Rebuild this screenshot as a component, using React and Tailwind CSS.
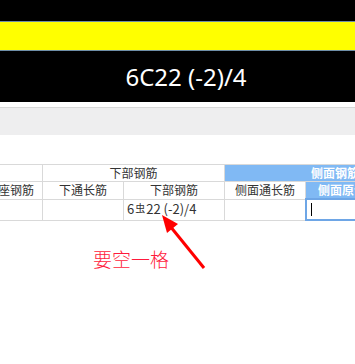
export default function App() {
  return (
    <div className="relative w-[355px] h-[364px] overflow-hidden bg-white font-['Noto_Sans','Noto_Sans_CJK_SC',sans-serif]">
      {/* top display bars */}
      <div className="h-[21px] bg-black" />
      <div className="h-[30px] bg-[#ffff00] border-y border-[#6f8fa8]" />
      <div className="h-[51px] bg-black flex items-center justify-center pl-[17px]">
        <span className="text-white text-[24px] leading-none">6C22 (-2)/4</span>
      </div>
      <div className="h-[5px]" />
      <div className="h-[28px] bg-[#eeeeef] border-t border-[#d8d8d8]" />
      <div className="h-[29px]" />

      {/* grid */}
      <div className="overflow-hidden">
        <table className="ml-[-20px] w-[464px] min-w-[464px] border-collapse table-fixed text-[12px] text-[#333] font-['Noto_Sans_CJK_SC',sans-serif]">
          <colgroup>
            <col className="w-[62px]" />
            <col className="w-[81px]" />
            <col className="w-[101px]" />
            <col className="w-[81px]" />
            <col className="w-[139px]" />
          </colgroup>
          <tbody>
            <tr className="h-[17px]">
              <td className="border border-[#d9d9d9] p-0" />
              <td colSpan={2} className="border border-[#d9d9d9] p-0 text-center leading-[16px]">下部钢筋</td>
              <td colSpan={2} className="border border-[#d9d9d9] p-0 bg-[#80b9f4] text-white font-bold leading-[16px] whitespace-nowrap overflow-hidden">
                <div className="pl-[86px]">侧面钢筋</div>
              </td>
            </tr>
            <tr className="h-[17px]">
              <td className="border border-[#d9d9d9] p-0 text-right pr-[8px] whitespace-nowrap overflow-hidden leading-[16px]">支座钢筋</td>
              <td className="border border-[#d9d9d9] p-0 text-center leading-[16px] whitespace-nowrap">下通长筋</td>
              <td className="border border-[#d9d9d9] p-0 text-center leading-[16px] whitespace-nowrap">下部钢筋</td>
              <td className="border border-[#d9d9d9] p-0 text-center leading-[16px] whitespace-nowrap">侧面通长筋</td>
              <td className="border border-[#d9d9d9] p-0 bg-[#80b9f4] text-white font-bold leading-[16px] whitespace-nowrap overflow-hidden">
                <div className="pl-[12px]">侧面原位钢筋</div>
              </td>
            </tr>
            <tr className="h-[21px]">
              <td className="border border-[#d9d9d9] p-0" />
              <td className="border border-[#d9d9d9] p-0" />
              <td className="border border-[#d9d9d9] p-0 leading-[18px] whitespace-nowrap text-[13px]">
                <span className="pl-[3px]">6</span>
                <span className="text-[10px] relative top-[-2px] px-[1px]">虫</span>
                <span>22 (-2)/4</span>
              </td>
              <td className="border border-[#d9d9d9] p-0" />
              <td className="border-2 border-[#6ea6e6] p-0">
                <div className="ml-[4px] w-px h-[13px] bg-black" />
              </td>
            </tr>
          </tbody>
        </table>
      </div>

      {/* annotation */}
      <div className="pl-[93px] pt-[28px] text-[19px] leading-none text-[#ff1a3c] font-light font-['Noto_Sans_CJK_SC',serif]">
        要空一格
      </div>
      <svg className="absolute left-0 top-0 pointer-events-none" width="355" height="364" viewBox="0 0 355 364">
        <line x1="204" y1="268" x2="170" y2="226" stroke="#ff0000" strokeWidth="3" />
        <polygon points="162,215 178,224 167,233" fill="#ff0000" />
      </svg>
    </div>
  );
}
